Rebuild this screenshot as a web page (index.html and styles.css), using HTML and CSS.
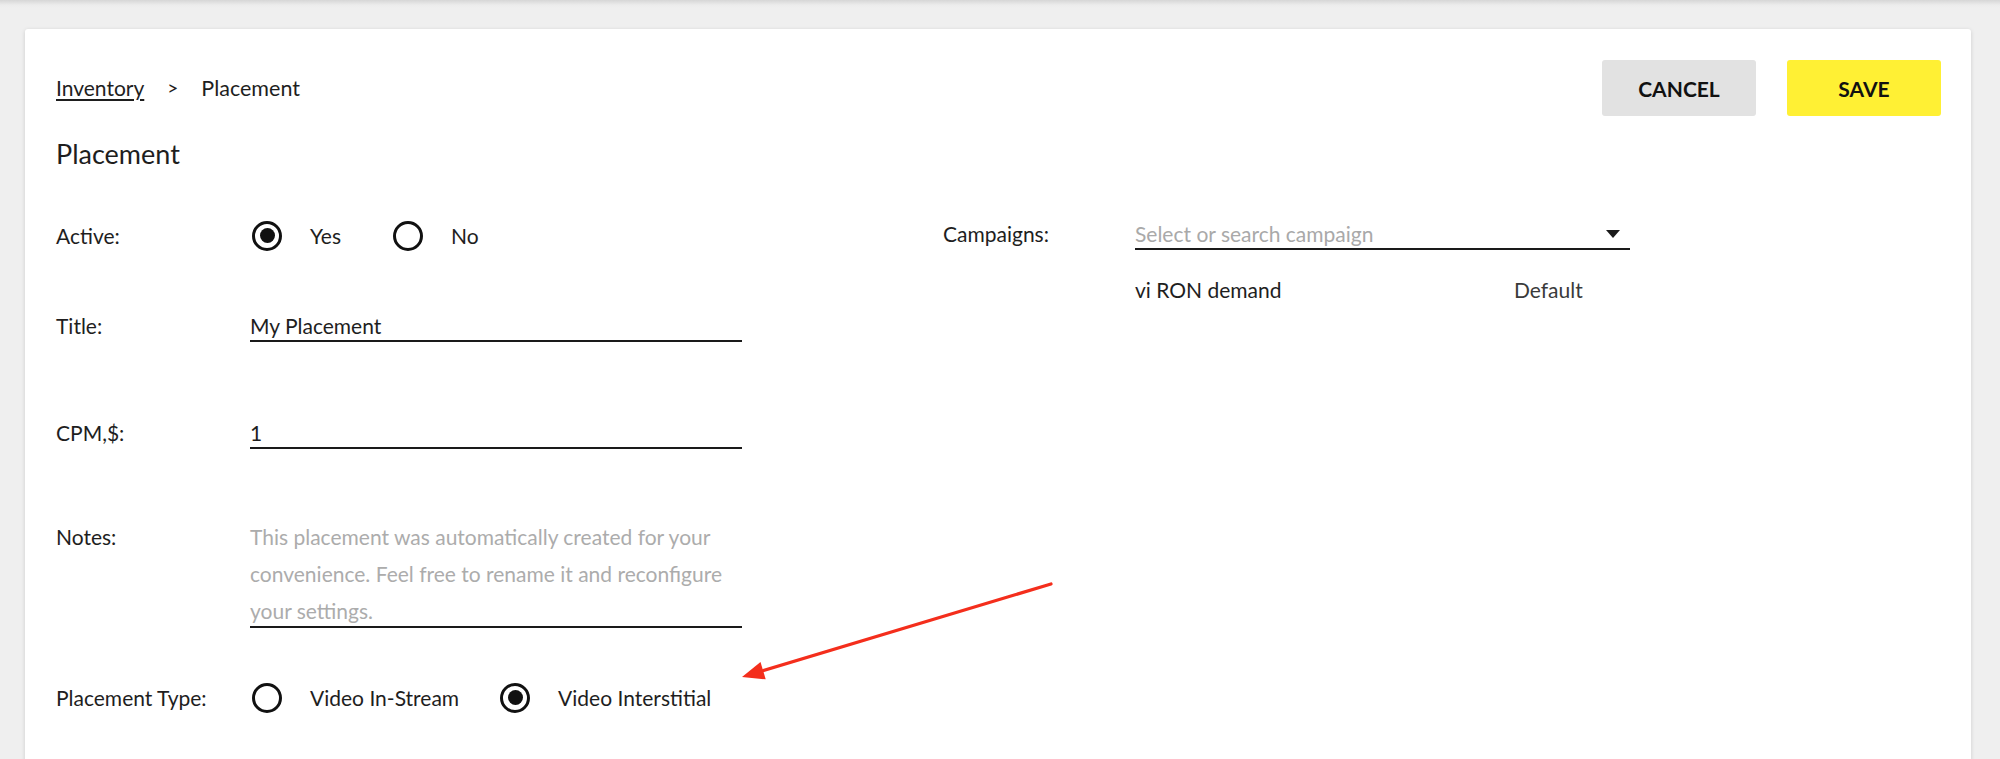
FILE: index.html
```html
<!DOCTYPE html>
<html lang="en">
<head>
<meta charset="utf-8">
<title>Placement</title>
<link rel="stylesheet" href="styles.css">
</head>
<body>
<div class="card">
  <div class="header">
    <nav class="breadcrumb">
      <a class="crumb-link" href="#">Inventory</a>
      <span class="crumb-sep">&gt;</span>
      <span class="crumb-current">Placement</span>
    </nav>
    <div class="actions">
      <button class="btn btn-cancel">CANCEL</button>
      <button class="btn btn-save">SAVE</button>
    </div>
  </div>

  <h1 class="page-title">Placement</h1>

  <div class="form">
    <div class="col col-left">
      <div class="row row-radio">
        <div class="label">Active:</div>
        <div class="options">
          <div class="option option-yes"><span class="radio checked"></span><span>Yes</span></div>
          <div class="option"><span class="radio"></span><span>No</span></div>
        </div>
      </div>

      <div class="row row-input row-title">
        <div class="label">Title:</div>
        <div class="field">My Placement</div>
      </div>

      <div class="row row-input row-cpm">
        <div class="label">CPM,$:</div>
        <div class="field">1</div>
      </div>

      <div class="row row-notes">
        <div class="label label-notes">Notes:</div>
        <div class="field field-notes">This placement was automatically created for your convenience. Feel free to rename it and reconfigure your settings.</div>
      </div>

      <div class="row row-radio row-type">
        <div class="label">Placement Type:</div>
        <div class="options">
          <div class="option option-stream"><span class="radio"></span><span>Video In-Stream</span></div>
          <div class="option"><span class="radio checked"></span><span>Video Interstitial</span></div>
        </div>
      </div>
    </div>

    <div class="col col-right">
      <div class="row row-input">
        <div class="label label-right">Campaigns:</div>
        <div class="field field-select">
          <span class="placeholder">Select or search campaign</span>
          <span class="caret"></span>
        </div>
      </div>
      <div class="campaign-item">
        <span class="campaign-name">vi RON demand</span>
        <span class="campaign-tag">Default</span>
      </div>
    </div>
  </div>
</div>

<svg class="annotation" width="325" height="115" viewBox="0 0 325 115" xmlns="http://www.w3.org/2000/svg">
  <line x1="316" y1="9" x2="27" y2="96" stroke="#f42e1c" stroke-width="3.2" stroke-linecap="round"/>
  <polygon points="7,102 30.7,104.3 25.5,87" fill="#f42e1c"/>
</svg>
</body>
</html>
```

FILE: styles.css
```css
html, body {
  margin: 0;
  padding: 0;
  height: 100%;
}

body {
  position: relative;
  overflow: hidden;
  background: linear-gradient(to bottom, #d6d6d6 0, #ececec 5px, #efefef 8px) no-repeat, #efefef;
  font-family: "Lato", "Liberation Sans", sans-serif;
  font-size: 21px;
  color: #1e1e1e;
}

.card {
  margin: 29px 29px 0 25px;
  min-height: 760px;
  box-sizing: border-box;
  padding: 31px 30px 0 31px;
  background: #fff;
  border-radius: 3px;
  box-shadow: 0 1px 4px rgba(0, 0, 0, 0.14);
}

/* header */
.header {
  display: flex;
  justify-content: space-between;
  align-items: center;
  height: 56px;
}

.breadcrumb {
  display: flex;
  align-items: center;
  gap: 23px;
  line-height: 28px;
}

.crumb-link {
  color: #1e1e1e;
  text-decoration: underline;
  text-decoration-thickness: 1.5px;
  text-underline-offset: 3px;
}

.crumb-sep {
  font-size: 19px;
}

.crumb-current {
  font-size: 21.5px;
}

.actions {
  display: flex;
  gap: 31px;
}

.btn {
  width: 154px;
  height: 56px;
  border: none;
  border-radius: 3px;
  font-family: "Lato", "Liberation Sans", sans-serif;
  font-weight: 700;
  font-size: 21px;
  color: #111;
  padding: 0;
  cursor: pointer;
}

.btn-cancel {
  background: #e2e2e2;
}

.btn-save {
  background: #fff034;
}

.page-title {
  margin: 22px 0 0 0;
  font-size: 27px;
  line-height: 32px;
  font-weight: 400;
  color: #1e1e1e;
}

/* form */
.form {
  display: flex;
  margin-top: 47px;
}

.col-left {
  width: 887px;
  flex: none;
}

.col-right {
  flex: none;
  padding-top: 3px;
}

.row {
  display: flex;
}

.label {
  width: 194px;
  flex: none;
}

.label-right {
  width: 192px;
}

.row-radio {
  align-items: center;
  height: 37px;
  line-height: 37px;
}

.row-input {
  align-items: baseline;
  line-height: 28px;
}

.field {
  width: 492px;
  border-bottom: 2px solid #1a1a1a;
  color: #1e1e1e;
}

.row-title {
  margin-top: 58px;
}

.row-cpm {
  margin-top: 77px;
}

.row-notes {
  margin-top: 69px;
  align-items: flex-start;
  line-height: 37px;
}

.field-notes {
  height: 108px;
  color: #acacac;
}

.row-type {
  margin-top: 51px;
}

.options {
  display: flex;
  align-items: center;
}

.option {
  display: flex;
  align-items: center;
  gap: 28px;
  margin-right: 50px;
}

.option-stream {
  margin-right: 39px;
}

.radio {
  box-sizing: border-box;
  width: 30px;
  height: 30px;
  margin-left: 2px;
  border: 3.5px solid #111;
  border-radius: 50%;
  display: flex;
  align-items: center;
  justify-content: center;
}

.radio.checked::after {
  content: "";
  width: 15px;
  height: 15px;
  border-radius: 50%;
  background: #111;
}

/* campaigns */
.field-select {
  width: 495px;
  display: flex;
  justify-content: space-between;
  align-items: center;
  padding-right: 10px;
  box-sizing: border-box;
}

.placeholder {
  color: #a9a9a9;
}

.caret {
  width: 0;
  height: 0;
  border-left: 7px solid transparent;
  border-right: 7px solid transparent;
  border-top: 8px solid #1a1a1a;
}

.campaign-item {
  display: grid;
  grid-template-columns: 379px auto;
  margin: 26px 0 0 192px;
  line-height: 28px;
}

.campaign-tag {
  color: #3a3a3a;
}

/* annotation arrow over the content */
.annotation {
  position: absolute;
  left: 735px;
  top: 575px;
  pointer-events: none;
}
```
